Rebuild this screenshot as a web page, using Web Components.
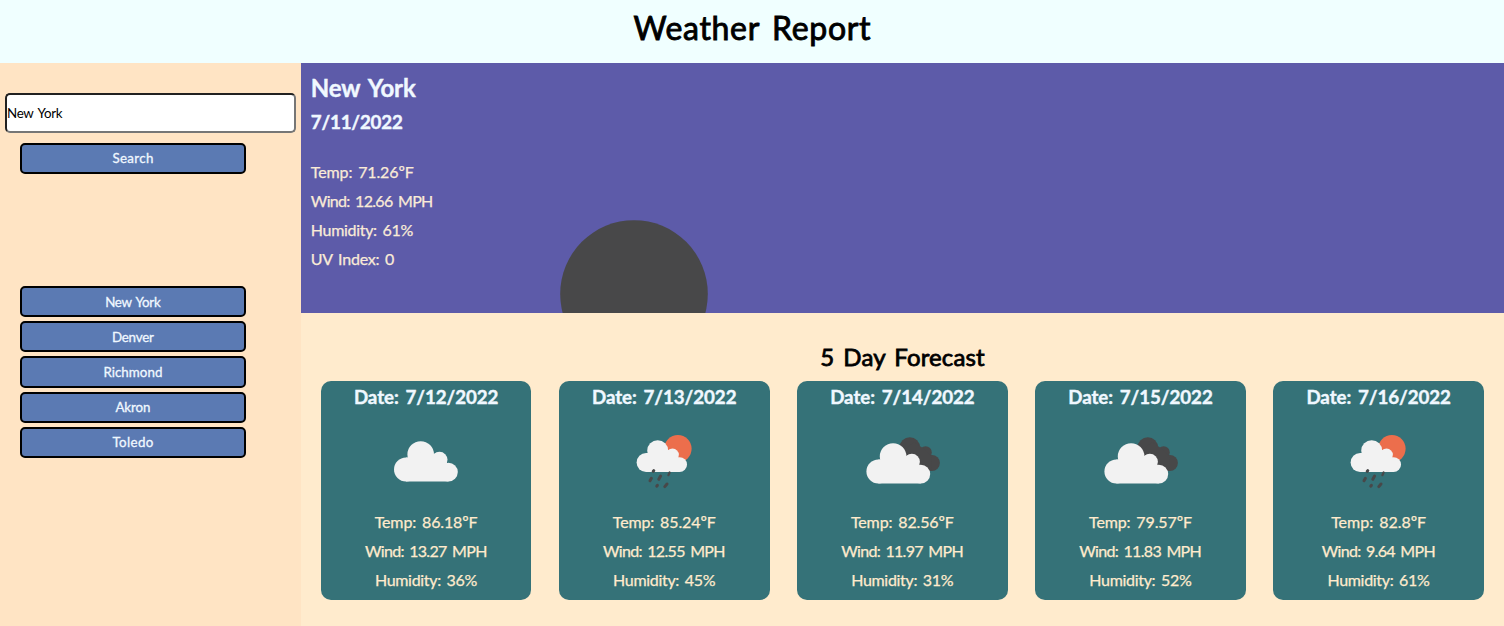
<!DOCTYPE html>
<html lang="en">
<head>
<meta charset="utf-8">
<title>Weather Report</title>
<style>
html,body{margin:0;height:100%;overflow:hidden}
body{font-family:"Trebuchet MS",Lato,"Open Sans",sans-serif;font-size:16px;background:#ffebcd}
</style>
</head>
<body>
<weather-app></weather-app>
<script>
class Base extends HTMLElement{
  constructor(){super();this.attachShadow({mode:'open'});}
  connectedCallback(){this.shadowRoot.innerHTML=this.render();this.ready();}
  ready(){}
  a(n){return this.getAttribute(n)||'';}
}

// One line of text whose tracking is set so that it takes up the width "w".
class TrackedText extends Base{
  render(){return `<style>:host{display:block;white-space:nowrap}span{display:inline-block;word-spacing:.12em}</style><span><slot></slot></span>`;}
  ready(){
    const s=this.shadowRoot.querySelector('span'),w=parseFloat(this.a('w'));
    if(!w)return;
    const n=this.textContent.length,d=(w-s.getBoundingClientRect().width)/(n-1);
    s.style.letterSpacing=d+'px';
    s.style.marginRight=-d+'px';
  }
}
customElements.define('tracked-text',TrackedText);

const cloud=`<g fill="#f2f2f2"><circle cx="44.7" cy="42.5" r="13.3"/><circle cx="30" cy="57.5" r="12"/><circle cx="63.5" cy="47.8" r="8"/><circle cx="72.4" cy="60.1" r="9.4"/><path d="M30 69.5V45.6H33L44 40L57.5 42L60 41L71 50.8L72.4 69.5Z"/></g>`;
const icons={
  cloud,
  broken:`<g fill="#484849"><circle cx="57.8" cy="35.5" r="10.3"/><circle cx="73.6" cy="40.5" r="6.2"/><circle cx="79.9" cy="51" r="8"/><path d="M50 40L62 30L70 35.4L79 43.5L80 59H70Z"/></g><g transform="translate(-3.6 2)">${cloud}</g>`,
  rain:`<circle cx="63.9" cy="36.7" r="13.7" fill="#ec6e4c"/><g transform="translate(8.4 5.1) scale(.79)">${cloud}</g><g stroke="#484849" stroke-width="3" stroke-linecap="round"><path d="M39.8 58.6L39.2 59.4M37.4 66.3L36 68.8M46.6 64L44.8 67.2M43.4 73.3L42.8 74.2M53 72L50.8 74.6"/><path d="M55.6 60.5L54.4 63.2" stroke-width="2.2"/></g>`
};
class WeatherIcon extends Base{
  render(){return `<style>:host{display:block;width:100px;height:100px}svg{display:block;filter:blur(.4px)}</style><svg width="100" height="100" viewBox="0 0 100 100">${icons[this.a('name')]}</svg>`;}
}
customElements.define('weather-icon',WeatherIcon);

class CityButton extends Base{
  render(){return `<style>:host{display:block;height:31.2px}
  button{box-sizing:border-box;display:flex;justify-content:center;width:100%;height:100%;margin:0;padding:0;border:2px solid #000;border-radius:5px;background:#5b7ab3;color:#f0f8ff;font:13.333px/27px "Trebuchet MS",Lato,"Open Sans",sans-serif}
  tracked-text{-webkit-text-stroke:.3px;padding-top:var(--label-drop,0)}</style>
  <button><tracked-text w="${this.a('w')}">${this.a('label')}</tracked-text></button>`;}
}
customElements.define('city-button',CityButton);

class SideBar extends Base{
  render(){
    const c=[['New York',55.5],['Denver',42],['Richmond',59],['Akron',35],['Toledo',41]];
    return `<style>:host{display:block;box-sizing:border-box;background:#ffe4c4;padding:30px 5px 0}
    .field{box-sizing:border-box;height:40px;border:2px inset #767676;border-radius:5px;background:#fff;font-size:13.333px;line-height:37px}
    .btns{padding:0 50px 0 15px}
    .search{margin-top:10px}
    .list{display:flex;flex-direction:column;gap:4px;margin-top:111.8px;--label-drop:.6px}</style>
    <div class="field"><tracked-text w="55.5">New York</tracked-text></div>
    <div class="btns search"><city-button label="Search" w="41"></city-button></div>
    <div class="btns list">${c.map(x=>`<city-button label="${x[0]}" w="${x[1]}"></city-button>`).join('')}</div>`;
  }
}
customElements.define('side-bar',SideBar);

class CurrentWeather extends Base{
  render(){return `<style>:host{display:flex;box-sizing:border-box;height:250px;overflow:hidden;background:#5d5ba9;padding-left:10px;color:#faebd7}
  .info{width:249.2px;flex:none}
  h2,h3{margin:0;color:#f0f8ff;-webkit-text-stroke:.4px}
  h2{font-size:24px;line-height:30px;padding-top:10px}
  h3{font-size:18.72px;line-height:24px;padding-top:7px}
  .rows{padding-top:23px;line-height:29px;-webkit-text-stroke:.25px}
  svg{display:block;margin-top:157.3px;flex:none;filter:blur(.5px)}</style>
  <div class="info"><h2><tracked-text w="105">New York</tracked-text></h2><h3><tracked-text w="92">7/11/2022</tracked-text></h3>
  <div class="rows"><tracked-text w="103">Temp: 71.26ºF</tracked-text><tracked-text w="122.5">Wind: 12.66 MPH</tracked-text><tracked-text w="102.5">Humidity: 61%</tracked-text><tracked-text w="83.5">UV Index: 0</tracked-text></div></div>
  <svg width="148" height="148" viewBox="0 0 148 148"><circle cx="74" cy="74" r="73.8" fill="#484849"/></svg>`;}
}
customElements.define('current-weather',CurrentWeather);

class ForecastCard extends Base{
  render(){return `<style>:host{display:flex;flex-direction:column;align-items:center;box-sizing:border-box;height:219px;width:210.7px;border-radius:10px;background:#357278;color:#ffebcd}
  h3{margin:0;font-size:18.72px;line-height:24px;padding-top:4px;color:#f0f8ff;-webkit-text-stroke:.4px}
  weather-icon{margin-top:3px;margin-right:.8px}
  .rows{display:flex;flex-direction:column;align-items:center;line-height:29px;margin-top:-5px;-webkit-text-stroke:.25px}</style>
  <h3><tracked-text w="144.5">Date: ${this.a('date')}</tracked-text></h3>
  <weather-icon name="${this.a('icon')}"></weather-icon>
  <div class="rows"><tracked-text w="${this.a('tw')||103}">Temp: ${this.a('temp')}ºF</tracked-text><tracked-text w="${this.a('ww')||122.5}">Wind: ${this.a('wind')} MPH</tracked-text><tracked-text w="102.5">Humidity: ${this.a('hum')}%</tracked-text></div>`;}
}
customElements.define('forecast-card',ForecastCard);

class ForecastPanel extends Base{
  render(){return `<style>:host{display:block;padding:0 20px}
  h2{margin:0;padding-top:29px;display:flex;justify-content:center;font-weight:400;font-size:24px;line-height:30px;-webkit-text-stroke:.8px}
  .cards{display:flex;justify-content:space-between;margin-top:9px}</style>
  <h2><tracked-text w="164.5">5 Day Forecast</tracked-text></h2>
  <div class="cards">
  <forecast-card date="7/12/2022" icon="cloud" temp="86.18" wind="13.27" hum="36"></forecast-card>
  <forecast-card date="7/13/2022" icon="rain" temp="85.24" wind="12.55" hum="45"></forecast-card>
  <forecast-card date="7/14/2022" icon="broken" temp="82.56" wind="11.97" hum="31"></forecast-card>
  <forecast-card date="7/15/2022" icon="broken" temp="79.57" wind="11.83" hum="52"></forecast-card>
  <forecast-card date="7/16/2022" icon="rain" temp="82.8" wind="9.64" hum="61" tw="95" ww="114"></forecast-card>
  </div>`;}
}
customElements.define('forecast-panel',ForecastPanel);

class WeatherApp extends Base{
  render(){return `<style>:host{display:grid;height:626px;grid-template:63px 1fr / 300.8px 1fr}
  header{grid-column:1/3;background:#f0ffff;display:flex;justify-content:center}
  h1{margin:0;padding-top:8px;font-weight:400;font-size:32px;line-height:40px;-webkit-text-stroke:.9px}</style>
  <header><h1><tracked-text w="237">Weather Report</tracked-text></h1></header>
  <side-bar></side-bar><main><current-weather></current-weather><forecast-panel></forecast-panel></main>`;}
}
customElements.define('weather-app',WeatherApp);
</script>
</body>
</html>
